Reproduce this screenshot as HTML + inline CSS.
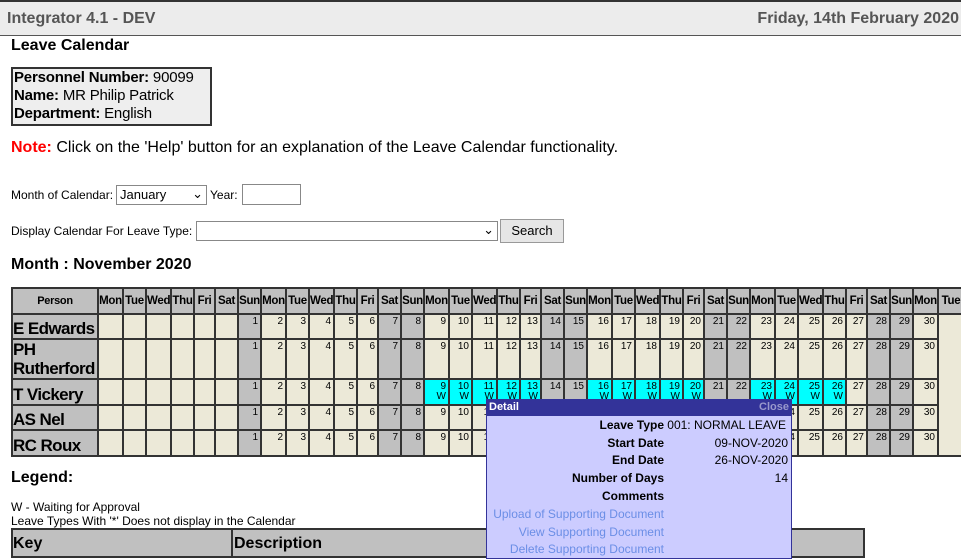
<!DOCTYPE html>
<html><head><meta charset="utf-8"><style>
*{box-sizing:border-box}
body{margin:0;width:961px;height:553px;overflow:hidden;background:#fff;font-family:"Liberation Sans",Arial,sans-serif;color:#000;position:relative}
.top{position:absolute;left:0;top:0;width:961px;height:36px;background:#ececec;border-top:2px solid #333;border-bottom:1px solid #555}
.top .l{position:absolute;left:7px;top:8px;font-size:16px;font-weight:bold;color:#555}
.top .r{position:absolute;right:2px;top:8px;font-size:16px;font-weight:bold;color:#555}
.abs{position:absolute}
.info{left:11px;top:67px;width:201px;height:59px;background:#eee;border:2px solid #333;font-size:15px;line-height:18px;padding:0 0 0 1px;white-space:nowrap;letter-spacing:-0.2px}
table.cal{position:absolute;left:11px;top:287px;border-collapse:collapse;table-layout:fixed;font-size:10px;width:952px}
table.cal td{border:2px solid #333;padding:0;vertical-align:top;text-align:right;background:#ece9d8;line-height:10px;padding:2px 2px 0 0;overflow:hidden;white-space:nowrap}
table.cal tr.h td{background:#c0c0c0;font-weight:bold;font-size:11.5px;letter-spacing:-0.3px;text-align:center;vertical-align:middle;padding:0;height:26px}
table.cal td.p{background:#c0c0c0;font-weight:bold;font-size:17px;letter-spacing:-0.6px;text-align:left;vertical-align:bottom;padding:0;line-height:19px;white-space:nowrap}
table.cal td.g{background:#c0c0c0}
table.cal td.c{background:#00ffff}
.pop{left:486px;top:399px;width:306px;height:160px;background:#ccf;border:1px solid #339;overflow:hidden}
.pop .hd{height:16px;background:#339;color:#fff;font-weight:bold;font-size:11px;padding:1px 2px}
.pop .hd span{float:right;color:#99c}
.pop table{border-collapse:collapse;font-size:12px;table-layout:fixed;width:304px}
.pop td{padding:0 3px;height:17.8px;white-space:nowrap}
.pop td.k{text-align:right;font-weight:bold}
.pop td.v{text-align:right}
.pop td.a{text-align:right;color:#6b8ee6}
</style></head><body>
<div class="top"><span class="l">Integrator 4.1 - DEV</span><span class="r">Friday, 14th February 2020</span></div>
<div class="abs" style="left:11px;top:37px;font-size:16px;font-weight:bold">Leave Calendar</div>
<div class="abs info"><b>Personnel Number:</b> 90099<br><b>Name:</b> MR Philip Patrick<br><b>Department:</b> English</div>
<div class="abs" style="left:11px;top:139px;font-size:16px"><b style="color:#f00">Note:</b> Click on the 'Help' button for an explanation of the Leave Calendar functionality.</div>
<div class="abs" style="left:11px;top:188px;font-size:12px">Month of Calendar:</div>
<div class="abs" style="left:116px;top:185px;width:91px;height:20px;border:1px solid #888;font-size:13px;padding:1px 3px">January<span style="position:absolute;right:3px;top:0">&#8964;</span></div>
<div class="abs" style="left:210px;top:188px;font-size:12px">Year:</div>
<div class="abs" style="left:242px;top:184px;width:59px;height:21px;border:1px solid #888"></div>
<div class="abs" style="left:11px;top:224px;font-size:12px">Display Calendar For Leave Type:</div>
<div class="abs" style="left:196px;top:221px;width:302px;height:20px;border:1px solid #888"><span style="position:absolute;right:3px;top:0;font-size:13px">&#8964;</span></div>
<div class="abs" style="left:500px;top:219px;width:64px;height:24px;border:1px solid #999;background:#e6e6e6;font-size:13px;text-align:center;line-height:21px">Search</div>
<div class="abs" style="left:11px;top:256px;font-size:16px;font-weight:bold">Month : November 2020</div>

<table class="cal">
<colgroup><col style="width:86px"><col style="width:25px"><col style="width:23px"><col style="width:25px"><col style="width:23px"><col style="width:21px"><col style="width:23px"><col style="width:23px"><col style="width:25px"><col style="width:23px"><col style="width:25px"><col style="width:23px"><col style="width:21px"><col style="width:23px"><col style="width:23px"><col style="width:25px"><col style="width:23px"><col style="width:25px"><col style="width:23px"><col style="width:21px"><col style="width:23px"><col style="width:23px"><col style="width:25px"><col style="width:23px"><col style="width:25px"><col style="width:23px"><col style="width:21px"><col style="width:23px"><col style="width:23px"><col style="width:25px"><col style="width:23px"><col style="width:25px"><col style="width:23px"><col style="width:21px"><col style="width:23px"><col style="width:23px"><col style="width:25px"><col style="width:26px"></colgroup>
<tr class="h"><td style="font-size:11px">Person</td><td>Mon</td><td>Tue</td><td>Wed</td><td>Thu</td><td>Fri</td><td>Sat</td><td>Sun</td><td>Mon</td><td>Tue</td><td>Wed</td><td>Thu</td><td>Fri</td><td>Sat</td><td>Sun</td><td>Mon</td><td>Tue</td><td>Wed</td><td>Thu</td><td>Fri</td><td>Sat</td><td>Sun</td><td>Mon</td><td>Tue</td><td>Wed</td><td>Thu</td><td>Fri</td><td>Sat</td><td>Sun</td><td>Mon</td><td>Tue</td><td>Wed</td><td>Thu</td><td>Fri</td><td>Sat</td><td>Sun</td><td>Mon</td><td>Tue</td></tr>
<tr style="height:25px"><td class="p">E Edwards</td><td></td><td></td><td></td><td></td><td></td><td></td><td class="g">1</td><td>2</td><td>3</td><td>4</td><td>5</td><td>6</td><td class="g">7</td><td class="g">8</td><td>9</td><td>10</td><td>11</td><td>12</td><td>13</td><td class="g">14</td><td class="g">15</td><td>16</td><td>17</td><td>18</td><td>19</td><td>20</td><td class="g">21</td><td class="g">22</td><td>23</td><td>24</td><td>25</td><td>26</td><td>27</td><td class="g">28</td><td class="g">29</td><td>30</td><td rowspan="5" style="border-top:2px solid #333"></td></tr>
<tr style="height:39px"><td class="p">PH<br>Rutherford</td><td></td><td></td><td></td><td></td><td></td><td></td><td class="g">1</td><td>2</td><td>3</td><td>4</td><td>5</td><td>6</td><td class="g">7</td><td class="g">8</td><td>9</td><td>10</td><td>11</td><td>12</td><td>13</td><td class="g">14</td><td class="g">15</td><td>16</td><td>17</td><td>18</td><td>19</td><td>20</td><td class="g">21</td><td class="g">22</td><td>23</td><td>24</td><td>25</td><td>26</td><td>27</td><td class="g">28</td><td class="g">29</td><td>30</td></tr>
<tr style="height:26px"><td class="p">T Vickery</td><td></td><td></td><td></td><td></td><td></td><td></td><td class="g">1</td><td>2</td><td>3</td><td>4</td><td>5</td><td>6</td><td class="g">7</td><td class="g">8</td><td class="c">9<br>W</td><td class="c">10<br>W</td><td class="c">11<br>W</td><td class="c">12<br>W</td><td class="c">13<br>W</td><td class="g">14</td><td class="g">15</td><td class="c">16<br>W</td><td class="c">17<br>W</td><td class="c">18<br>W</td><td class="c">19<br>W</td><td class="c">20<br>W</td><td class="g">21</td><td class="g">22</td><td class="c">23<br>W</td><td class="c">24<br>W</td><td class="c">25<br>W</td><td class="c">26<br>W</td><td>27</td><td class="g">28</td><td class="g">29</td><td>30</td></tr>
<tr style="height:25px"><td class="p">AS Nel</td><td></td><td></td><td></td><td></td><td></td><td></td><td class="g">1</td><td>2</td><td>3</td><td>4</td><td>5</td><td>6</td><td class="g">7</td><td class="g">8</td><td>9</td><td>10</td><td>11</td><td>12</td><td>13</td><td class="g">14</td><td class="g">15</td><td>16</td><td>17</td><td>18</td><td>19</td><td>20</td><td class="g">21</td><td class="g">22</td><td>23</td><td>24</td><td>25</td><td>26</td><td>27</td><td class="g">28</td><td class="g">29</td><td>30</td></tr>
<tr style="height:26px"><td class="p">RC Roux</td><td></td><td></td><td></td><td></td><td></td><td></td><td class="g">1</td><td>2</td><td>3</td><td>4</td><td>5</td><td>6</td><td class="g">7</td><td class="g">8</td><td>9</td><td>10</td><td>11</td><td>12</td><td>13</td><td class="g">14</td><td class="g">15</td><td>16</td><td>17</td><td>18</td><td>19</td><td>20</td><td class="g">21</td><td class="g">22</td><td>23</td><td>24</td><td>25</td><td>26</td><td>27</td><td class="g">28</td><td class="g">29</td><td>30</td></tr>
</table>

<div class="abs" style="left:11px;top:469px;font-size:16px;font-weight:bold">Legend:</div>
<div class="abs" style="left:11px;top:500px;font-size:12px;line-height:14px">W - Waiting for Approval<br>Leave Types With '*' Does not display in the Calendar</div>
<div class="abs" style="left:11px;top:528px;width:854px;height:30px;background:#c0c0c0;border:2px solid #333"></div>
<div class="abs" style="left:231px;top:528px;width:2px;height:30px;background:#333"></div>
<div class="abs" style="left:13px;top:535px;font-size:16px;font-weight:bold">Key</div>
<div class="abs" style="left:234px;top:535px;font-size:16px;font-weight:bold">Description</div>

<div class="abs pop"><div class="hd">Detail<span>Close</span></div>
<table>
<colgroup><col style="width:180px"><col style="width:124px"></colgroup>
<tr><td class="k">Leave Type <span style="font-weight:normal;position:absolute;right:5px">001: NORMAL LEAVE</span></td><td class="v"></td></tr>
<tr><td class="k">Start Date</td><td class="v">09-NOV-2020</td></tr>
<tr><td class="k">End Date</td><td class="v">26-NOV-2020</td></tr>
<tr><td class="k">Number of Days</td><td class="v">14</td></tr>
<tr><td class="k">Comments</td><td class="v"></td></tr>
<tr><td class="a">Upload of Supporting Document</td><td></td></tr>
<tr><td class="a">View Supporting Document</td><td></td></tr>
<tr><td class="a">Delete Supporting Document</td><td></td></tr>
</table></div>
</body></html>
